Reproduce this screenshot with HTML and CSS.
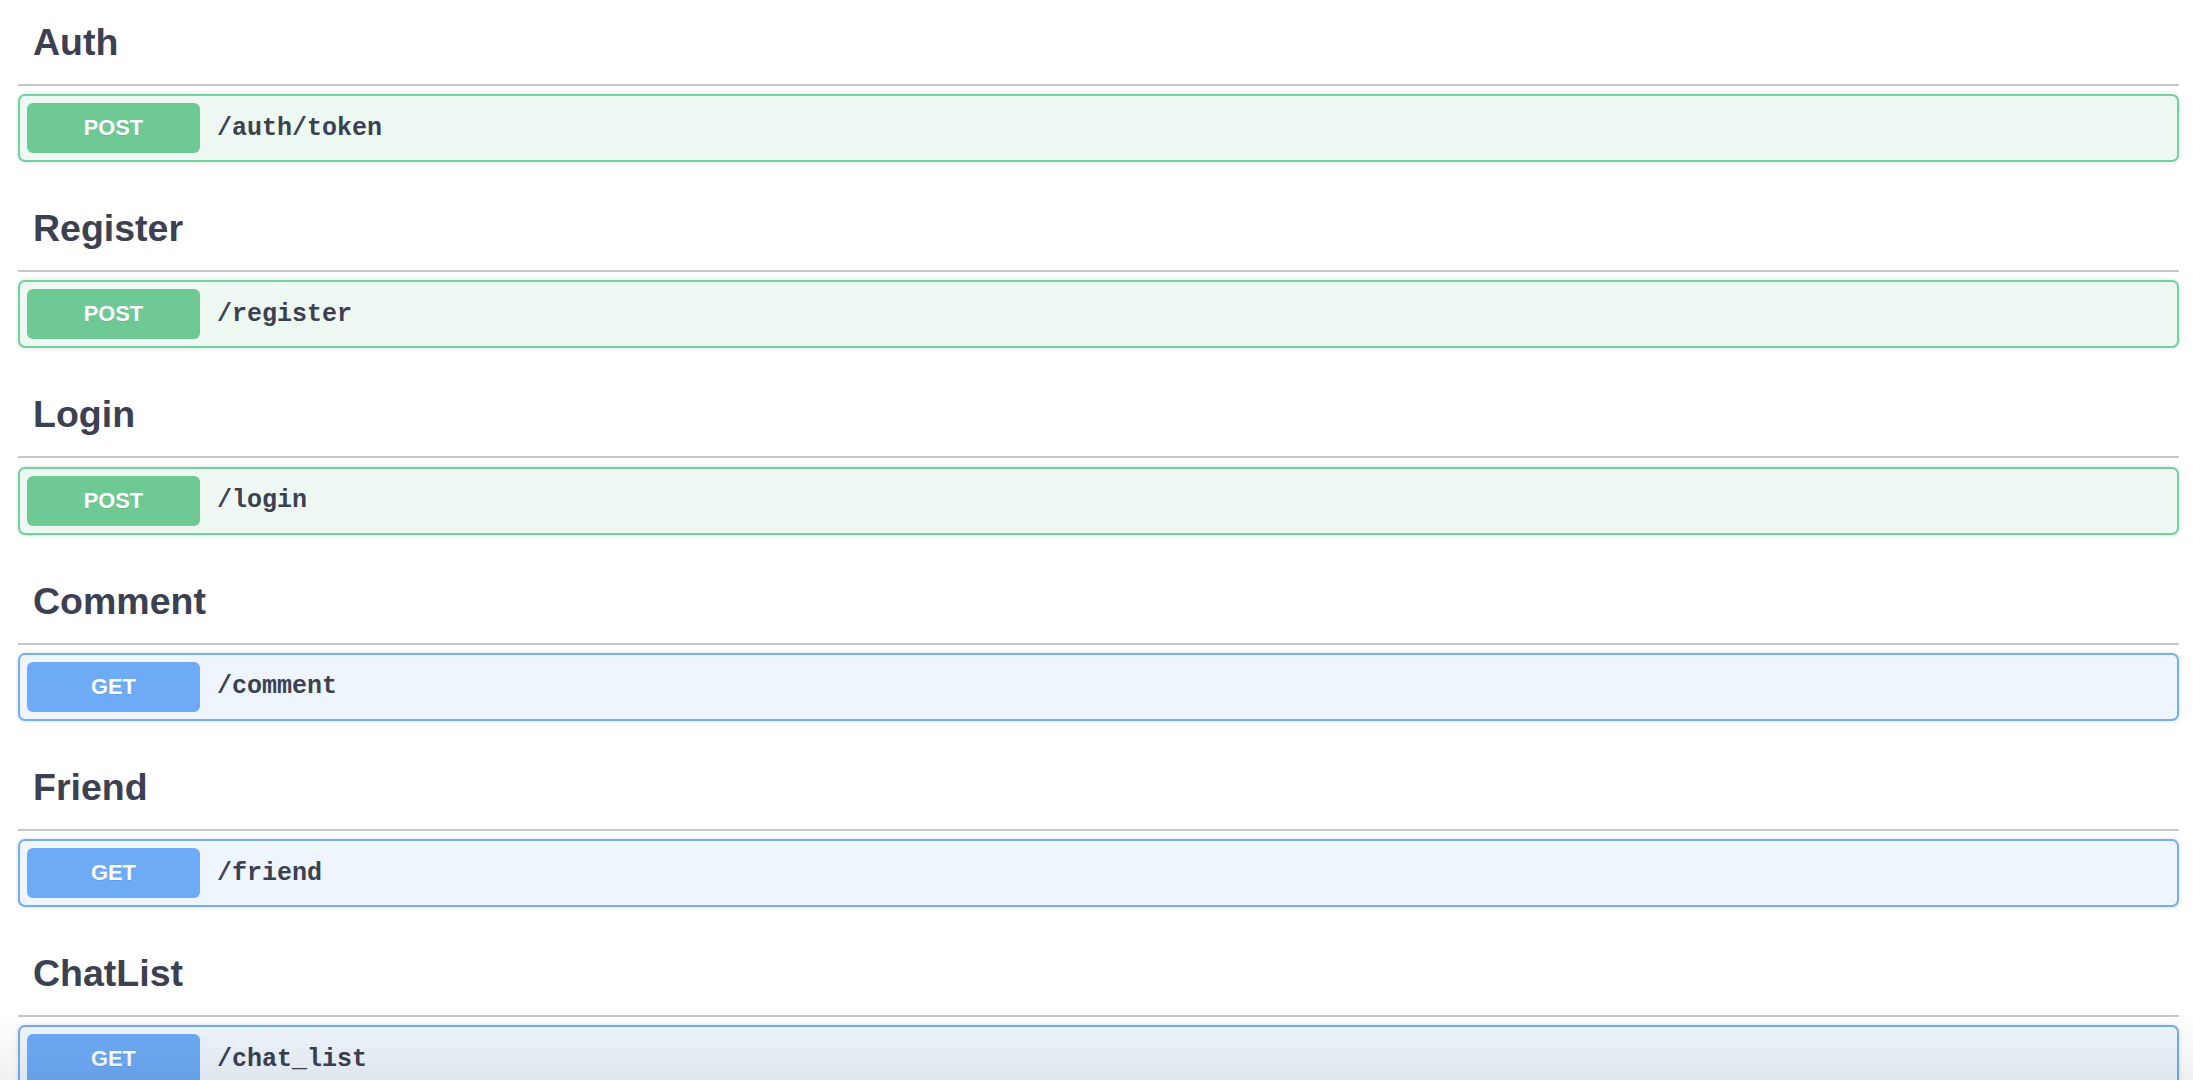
FILE: index.html
```html
<!DOCTYPE html>
<html lang="en">
<head>
<meta charset="utf-8">
<title>API</title>
<link rel="stylesheet" href="styles.css">
</head>
<body>
<div class="wrapper">
  <section class="tag-section">
    <h3 class="tag-title">Auth</h3>
    <div class="opblock opblock-post">
      <span class="method">POST</span>
      <span class="path">/auth/token</span>
    </div>
  </section>
  <section class="tag-section">
    <h3 class="tag-title">Register</h3>
    <div class="opblock opblock-post">
      <span class="method">POST</span>
      <span class="path">/register</span>
    </div>
  </section>
  <section class="tag-section">
    <h3 class="tag-title">Login</h3>
    <div class="opblock opblock-post">
      <span class="method">POST</span>
      <span class="path">/login</span>
    </div>
  </section>
  <section class="tag-section">
    <h3 class="tag-title">Comment</h3>
    <div class="opblock opblock-get">
      <span class="method">GET</span>
      <span class="path">/comment</span>
    </div>
  </section>
  <section class="tag-section">
    <h3 class="tag-title">Friend</h3>
    <div class="opblock opblock-get">
      <span class="method">GET</span>
      <span class="path">/friend</span>
    </div>
  </section>
  <section class="tag-section">
    <h3 class="tag-title">ChatList</h3>
    <div class="opblock opblock-get">
      <span class="method">GET</span>
      <span class="path">/chat_list</span>
    </div>
  </section>
</div>
<div class="bottom-fade"></div>
</body>
</html>
```

FILE: styles.css
```css
html, body {
  margin: 0;
  padding: 0;
  background: #ffffff;
  overflow: hidden;
}

body {
  font-family: "Liberation Sans", Arial, sans-serif;
  color: #3b4151;
}

.wrapper {
  margin-left: 18px;
  width: 2161px;
}

.tag-section {
  display: flex;
  flex-direction: column;
}

.tag-title {
  margin: 0;
  height: 52px;
  padding: 16px 0 16px 15px;
  border-bottom: 2px solid #c4c6ca;
  font-size: 37.5px;
  line-height: 52px;
  font-weight: 700;
  color: #3b4151;
}

.opblock {
  margin-top: 8.3px;
  margin-bottom: 23.9px;
  display: flex;
  align-items: center;
  padding: 7px;
  border: 2px solid;
  border-radius: 7px;
  box-shadow: 0 0 4px rgba(0, 0, 0, 0.14);
}

.opblock-post {
  background: #eef8f2;
  border-color: #72d29d;
}

.opblock-get {
  background: #eef5fd;
  border-color: #74aef5;
}

.method {
  width: 173px;
  height: 50px;
  display: flex;
  align-items: center;
  justify-content: center;
  border-radius: 6px;
  color: #ffffff;
  font-family: "Liberation Sans", Arial, sans-serif;
  font-weight: 700;
  font-size: 21.8px;
  text-shadow: 0 1px 0 rgba(0, 0, 0, 0.1);
}

.opblock-post .method {
  background: #6fc994;
}

.opblock-get .method {
  background: #6eabf6;
}

.path {
  margin-left: 17px;
  font-family: "Liberation Mono", "Courier New", monospace;
  font-weight: 700;
  font-size: 25px;
  color: #3b4151;
}

.bottom-fade {
  position: fixed;
  left: 0;
  right: 0;
  bottom: 0;
  height: 66px;
  background: linear-gradient(to bottom, rgba(0, 0, 0, 0), rgba(0, 0, 0, 0.06));
  pointer-events: none;
}
```
